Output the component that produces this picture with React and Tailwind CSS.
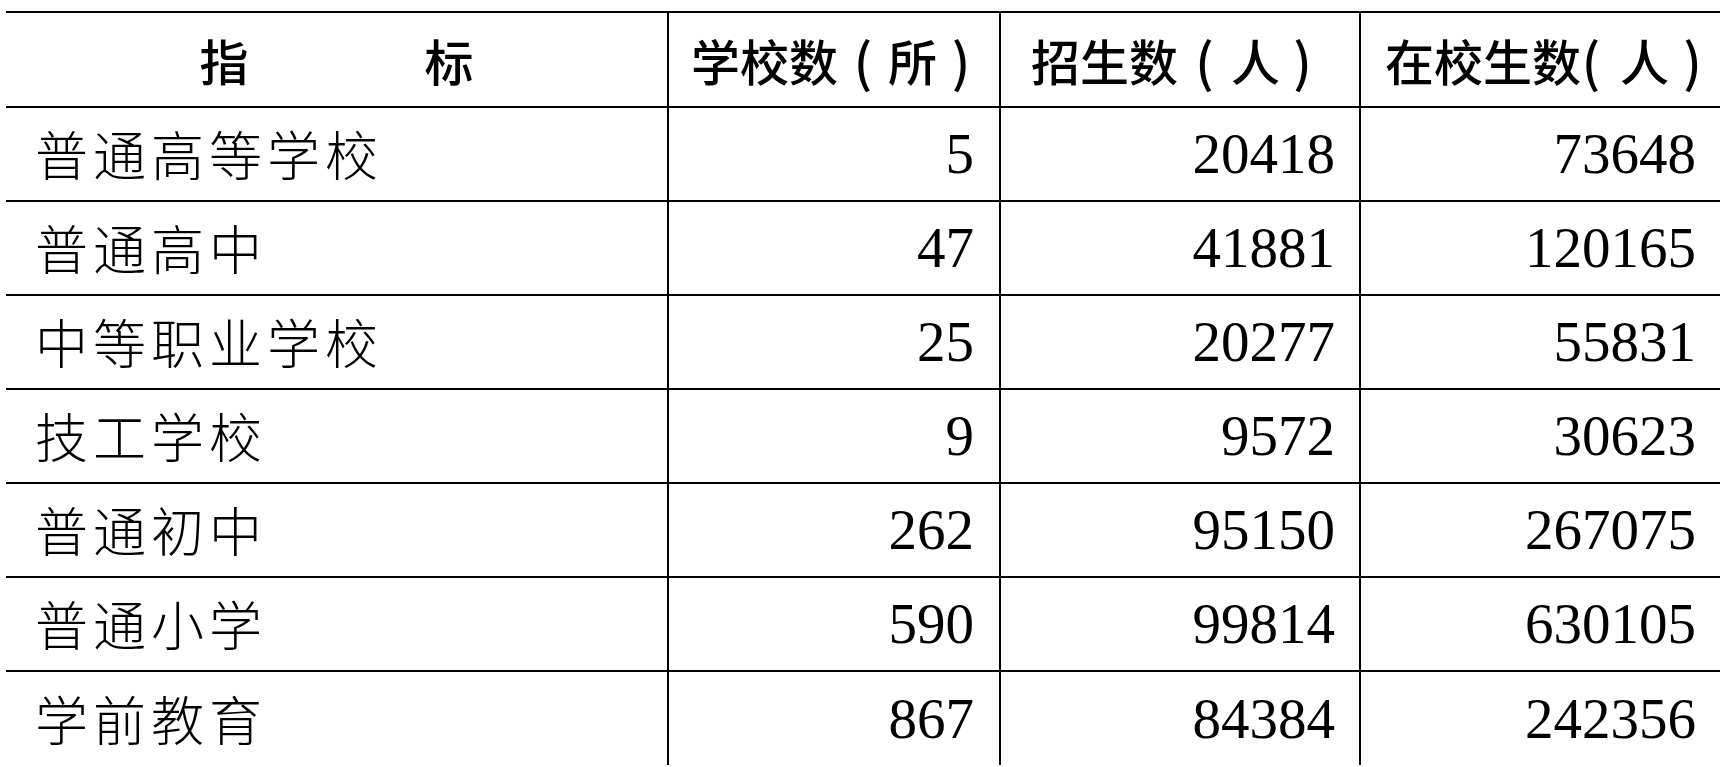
import React from "react";

const rows = [
    { name: "普通高等学校", schools: "5", enroll: "20418", students: "73648" },
    { name: "普通高中", schools: "47", enroll: "41881", students: "120165" },
    { name: "中等职业学校", schools: "25", enroll: "20277", students: "55831" },
    { name: "技工学校", schools: "9", enroll: "9572", students: "30623" },
    { name: "普通初中", schools: "262", enroll: "95150", students: "267075" },
    { name: "普通小学", schools: "590", enroll: "99814", students: "630105" },
    { name: "学前教育", schools: "867", enroll: "84384", students: "242356" },
];

const cjk = "font-['Noto_Sans_CJK_SC',sans-serif]";
const num = "font-['Liberation_Serif','Times_New_Roman',serif]";
const th = `border-b-2 border-black p-0 ${cjk} font-medium text-[49px] whitespace-nowrap`;

const App = () => {
    return (
        <div className="w-[1720px] h-[767px] overflow-hidden bg-white pt-[11px] pl-[6px]">
            <table className="table-fixed border-collapse text-black w-[1716px]">
                <colgroup>
                    <col className="w-[662px]" />
                    <col className="w-[332px]" />
                    <col className="w-[360px]" />
                    <col className="w-[362px]" />
                </colgroup>
                <thead>
                    <tr className="h-[95px] border-t-2 border-black">
                        <th className={`${th} border-r-2`}>
                            <div className="flex justify-center gap-[176px]">
                                <span>指</span>
                                <span>标</span>
                            </div>
                        </th>
                        <th className={`${th} border-r-2`}>
                            <div className="flex items-center pl-[22px]">
                                <span>学校数</span>
                                <span className="w-[50px] text-center text-[52px]">(</span>
                                <span>所</span>
                                <span className="w-[48px] text-center text-[52px]">)</span>
                            </div>
                        </th>
                        <th className={`${th} border-r-2`}>
                            <div className="flex items-center pl-[30px]">
                                <span>招生数</span>
                                <span className="w-[53px] text-center text-[52px]">(</span>
                                <span>人</span>
                                <span className="w-[45px] text-center text-[52px]">)</span>
                            </div>
                        </th>
                        <th className={th}>
                            <div className="flex items-center pl-[24px]">
                                <span>在校生数</span>
                                <span className="w-[20px] text-center text-[52px]">(</span>
                                <span className="ml-[19px]">人</span>
                                <span className="w-[47px] text-center text-[52px]">)</span>
                            </div>
                        </th>
                    </tr>
                </thead>
                <tbody>
                    {rows.map((row, i) => {
                        // the last row runs off the bottom of the page, no closing rule
                        const line = i === rows.length - 1 ? "border-b-0" : "border-b-2";
                        return (
                            <tr key={row.name} className="h-[94px]">
                                <td className={`${line} border-r-2 border-black pl-[29px] ${cjk} font-light text-[53px] tracking-[5px]`}>
                                    {row.name}
                                </td>
                                <td className={`${line} border-r-2 border-black text-right pr-[25px] ${num} text-[57px]`}>
                                    {row.schools}
                                </td>
                                <td className={`${line} border-r-2 border-black text-right pr-[24px] ${num} text-[57px]`}>
                                    {row.enroll}
                                </td>
                                <td className={`${line} border-black text-right pr-[26px] ${num} text-[57px]`}>
                                    {row.students}
                                </td>
                            </tr>
                        );
                    })}
                </tbody>
            </table>
        </div>
    );
};

export default App;
